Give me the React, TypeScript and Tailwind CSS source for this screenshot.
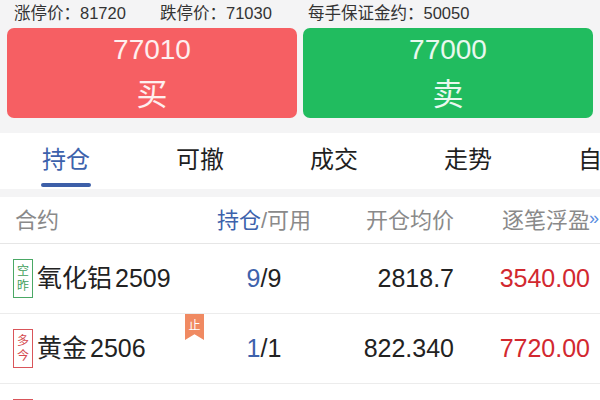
const font = "font-['Liberation_Sans','Noto_Sans_CJK_SC',sans-serif]";

type Row = {
  tag: [string, string];
  tagColor: "green" | "red";
  name: string;
  code: string;
  hold: string;
  avail: string;
  price: string;
  pnl: string;
  stop?: boolean;
};

const rows: Row[] = [
  { tag: ["空", "昨"], tagColor: "green", name: "氧化铝", code: "2509", hold: "9", avail: "9", price: "2818.7", pnl: "3540.00" },
  { tag: ["多", "今"], tagColor: "red", name: "黄金", code: "2506", hold: "1", avail: "1", price: "822.340", pnl: "7720.00", stop: true },
  { tag: ["多", "今"], tagColor: "red", name: "白银", code: "2508", hold: "2", avail: "2", price: "8120", pnl: "1560.00" },
];

function Tag({ tag, color }: { tag: [string, string]; color: "green" | "red" }) {
  const cls =
    color === "green"
      ? "border-[#4aa865] text-[#3f9e5a]"
      : "border-[#d9555a] text-[#d44b50]";
  return (
    <div
      className={`flex flex-col items-center justify-center w-[20px] h-[39px] border ${cls} text-[12px] leading-[15px] bg-white`}
    >
      <span>{tag[0]}</span>
      <span>{tag[1]}</span>
    </div>
  );
}

export default function App() {
  const tabs = ["持仓", "可撤", "成交", "走势", "自选"];
  return (
    <div className={`w-[600px] h-[400px] overflow-hidden bg-[#f4f4f5] ${font}`}>
      {/* limit prices */}
      <div className="h-[26px] flex items-center pl-[14px] text-[16.5px] text-[#333]">
        <span className="w-[146px]">涨停价：81720</span>
        <span className="w-[148px]">跌停价：71030</span>
        <span>每手保证金约：50050</span>
      </div>

      {/* buy / sell */}
      <div className="mt-[2px] flex gap-[6px] px-[7px]">
        <button className="w-[290px] h-[90px] rounded-[7px] bg-[#f65f63] text-white/90 flex flex-col items-center">
          <span className="text-[28px] font-light leading-none mt-[8px]">77010</span>
          <span className="text-[31px] leading-none mt-[15px]">买</span>
        </button>
        <button className="w-[290px] h-[90px] rounded-[7px] bg-[#21bc5f] text-white/90 flex flex-col items-center">
          <span className="text-[28px] font-light leading-none mt-[8px]">77000</span>
          <span className="text-[31px] leading-none mt-[15px]">卖</span>
        </button>
      </div>

      {/* tabs */}
      <div className="mt-[15px] h-[56px] bg-white flex -ml-[1px] overflow-hidden">
        {tabs.map((t, i) => (
          <div key={t} className="w-[134px] shrink-0 flex flex-col items-center">
            <span
              className={`mt-[13px] text-[24px] leading-[28px] ${i === 0 ? "text-[#3d62ac]" : "text-[#1f1f1f]"}`}
            >
              {t}
            </span>
            {i === 0 && <div className="mt-[9px] w-[50px] h-[4px] rounded-full bg-[#3d5fa8]" />}
          </div>
        ))}
      </div>

      {/* column header */}
      <div className="mt-[8px] h-[47px] bg-white border-b border-[#e6e6e6] flex items-center text-[22px] text-[#8a8a8a] relative">
        <span className="w-[214px] pl-[15px]">合约</span>
        <span className="w-[100px] text-center">
          <span className="text-[#3d62ac]">持仓</span>/可用
        </span>
        <span className="w-[140px] text-right">开仓均价</span>
        <span className="w-[136px] text-right">逐笔浮盈</span>
        <span className="absolute right-[1px] top-[9px] text-[18px] text-[#5b8ee0] leading-[24px]">»</span>
      </div>

      {/* positions */}
      {rows.map((r) => (
        <div
          key={r.name}
          className="relative h-[70px] bg-white border-b border-[#ececec] flex items-center text-[25px] text-[#222]"
        >
          <div className="w-[214px] pl-[13px] flex items-center gap-[4px]">
            <Tag tag={r.tag} color={r.tagColor} />
            <span>
              {r.name}
              <span className="ml-[3px]">{r.code}</span>
            </span>
          </div>
          <span className="w-[100px] text-center">
            <span className="text-[#3d62ac]">{r.hold}</span>/{r.avail}
          </span>
          <span className="w-[140px] text-right">{r.price}</span>
          <span className="w-[136px] text-right text-[#d2282f]">{r.pnl}</span>
          {r.stop && (
            <div className="absolute left-[185px] top-0 w-[19px] h-[26px] bg-[#f08a62] text-white text-[12px] flex justify-center pt-[3px] [clip-path:polygon(0_0,100%_0,100%_100%,50%_78%,0_100%)]">
              止
            </div>
          )}
        </div>
      ))}
    </div>
  );
}
